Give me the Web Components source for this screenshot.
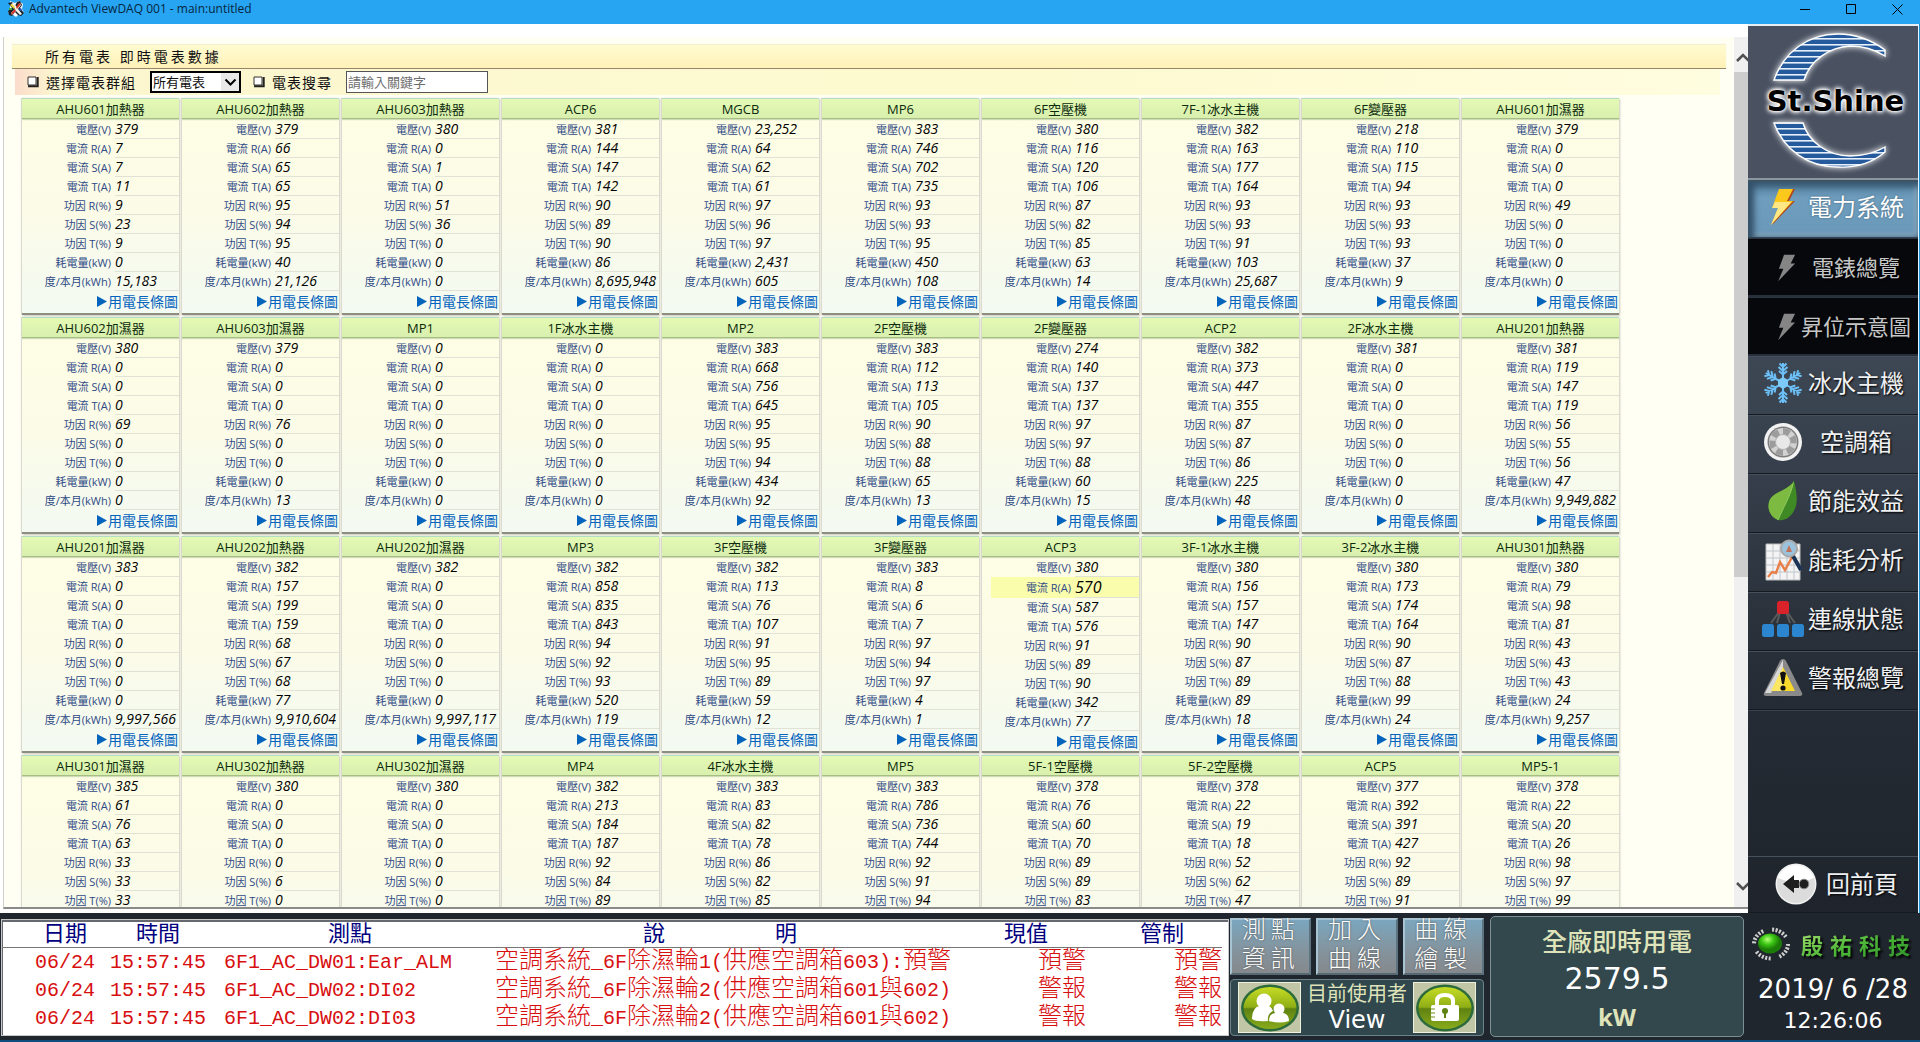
<!DOCTYPE html>
<html lang="zh-Hant">
<head>
<meta charset="utf-8">
<title>Advantech ViewDAQ 001 - main:untitled</title>
<style>
html, body { margin: 0; height: 100%; overflow: hidden; }
body { font-family: "Open Sans", "Noto Sans CJK TC", sans-serif; background: #1f252d; }
</style>
</head>
<body>
<daq-app></daq-app>
<script>
const define = (name, html, setup) => {
  const tpl = document.createElement('template');
  tpl.innerHTML = html;
  customElements.define(name, class extends HTMLElement {
    connectedCallback() {
      if (this.shadowRoot) return;
      this.attachShadow({ mode: 'open' }).appendChild(tpl.content.cloneNode(true));
      if (setup) setup(this, this.shadowRoot);
    }
  });
};

const LABELS = ['電壓(V)', '電流 R(A)', '電流 S(A)', '電流 T(A)', '功因 R(%)', '功因 S(%)', '功因 T(%)', '耗電量(kW)', '度/本月(kWh)'];
const METERS = `AHU601加熱器|379 7 7 11 9 23 9 0 15,183
AHU602加熱器|379 66 65 65 95 94 95 40 21,126
AHU603加熱器|380 0 1 0 51 36 0 0 0
ACP6|381 144 147 142 90 89 90 86 8,695,948
MGCB|23,252 64 62 61 97 96 97 2,431 605
MP6|383 746 702 735 93 93 95 450 108
6F空壓機|380 116 120 106 87 82 85 63 14
7F-1冰水主機|382 163 177 164 93 93 91 103 25,687
6F變壓器|218 110 115 94 93 93 93 37 9
AHU601加濕器|379 0 0 0 49 0 0 0 0
AHU602加濕器|380 0 0 0 69 0 0 0 0
AHU603加濕器|379 0 0 0 76 0 0 0 13
MP1|0 0 0 0 0 0 0 0 0
1F冰水主機|0 0 0 0 0 0 0 0 0
MP2|383 668 756 645 95 95 94 434 92
2F空壓機|383 112 113 105 90 88 88 65 13
2F變壓器|274 140 137 137 97 97 88 60 15
ACP2|382 373 447 355 87 87 86 225 48
2F冰水主機|381 0 0 0 0 0 0 0 0
AHU201加熱器|381 119 147 119 56 55 56 47 9,949,882
AHU201加濕器|383 0 0 0 0 0 0 0 9,997,566
AHU202加熱器|382 157 199 159 68 67 68 77 9,910,604
AHU202加濕器|382 0 0 0 0 0 0 0 9,997,117
MP3|382 858 835 843 94 92 93 520 119
3F空壓機|382 113 76 107 91 95 89 59 12
3F變壓器|383 8 6 7 97 94 97 4 1
ACP3|380 *570 587 576 91 89 90 342 77
3F-1冰水主機|380 156 157 147 90 87 89 89 18
3F-2冰水主機|380 173 174 164 90 87 88 99 24
AHU301加熱器|380 79 98 81 43 43 43 24 9,257
AHU301加濕器|385 61 76 63 33 33 33
AHU302加熱器|380 0 0 0 0 6 0
AHU302加濕器|380 0 0 0 0 0 0
MP4|382 213 184 187 92 84 89
4F冰水主機|383 83 82 78 86 82 85
MP5|383 786 736 744 92 91 94
5F-1空壓機|378 76 60 70 89 89 83
5F-2空壓機|378 22 19 18 52 62 47
ACP5|377 392 391 427 92 89 91
MP5-1|378 22 20 26 98 97 99`.split('\n').map(line => {
  const [name, values] = line.split('|');
  return { name, values: values.split(' ') };
});

/* ---------- window title bar ---------- */
define('daq-titlebar', `
<style>
:host { display: flex; height: 24px; box-sizing: border-box; padding: 0 0 6px 7px; align-items: center; background: #27a4f2; color: #06263d; font-size: 12px; }
h1 { flex: 1; margin: 0 0 0 4px; font-size: 12px; line-height: 18px; font-weight: 400; }
button { width: 46px; height: 18px; padding: 0; border: 0; background: none; display: grid; place-items: center; }
svg { display: block; }
</style>
<svg width="18" height="18" viewBox="0 0 18 18" aria-hidden="true">
  <path d="M3 1l5 2 4-2 4 3-1 5 2 4-5 1-3 3-4-3-4-1 2-4z" fill="#fff"/>
  <path d="M1 3l4-1 3 4 2-4 3-1 2 4-2 3 4 5-3 3-3-1-3-3-3 4-3-1-1-4 4-3z" fill="#17222c"/>
  <path d="M4 4l2-1 4 4 3-4 1 2-3 4 4 5-2 1-4-4-4 4-1-2 4-4z" fill="#f4f4ee"/>
  <path d="M5 4l3 3-1 2-4-4z" fill="#f0d83c"/>
  <path d="M12 3l2 1-4 5-1-2z" fill="#d0382b"/>
  <path d="M4 13l4-4 1 2-4 4z" fill="#d0382b"/>
  <path d="M2 8h3v2H2z" fill="#3fae4a"/><path d="M13 8l2 1-1 2-2-1z" fill="#3059c8"/>
</svg>
<h1>Advantech ViewDAQ 001 - main:untitled</h1>
<button aria-label="Minimize"><svg width="11" height="11"><path d="M0 5.500h10" stroke="#000" fill="none"/></svg></button>
<button aria-label="Maximize"><svg width="11" height="11"><path d="M.5 .5h9v9h-9z" stroke="#000" fill="none"/></svg></button>
<button aria-label="Close"><svg width="11" height="11"><path d="M.5 .5l10 10M10.500 .5l-10 10" stroke="#000" fill="none"/></svg></button>
`);

/* ---------- one power meter ---------- */
define('meter-card', `
<style>
:host { display: flex; flex-direction: column; box-sizing: border-box; min-height: 217px; background: linear-gradient(#fffee4, #fbfbe8 55%, #f3faf2); border-bottom: 2px solid #8d8d82; box-shadow: 1px 1px 2px #c9c9bd, -1px 0 1px #dcdcd2; }
h2 { margin: 0 0 1px; box-sizing: border-box; height: 21px; border-top: 1px solid #b4dcc4; border-bottom: 1px solid #a6bd84; background: linear-gradient(#e4fab4, #d8efae); font-size: 13px; line-height: 20px; font-weight: 400; color: #0c2b0c; text-align: center; box-shadow: 0 1px 1px #cfdcb8; }
table { border-spacing: 0; table-layout: fixed; margin-left: 9px; width: 148px; }
th, td { padding: 0; height: 19px; box-sizing: border-box; white-space: nowrap; }
th { width: 84px; padding-right: 4px; font-size: 11px; line-height: 17px; font-weight: 400; color: #2f4a86; text-align: right; }
td { border-bottom: 1px solid #e0e2d6; font-size: 14px; line-height: 18px; font-style: italic; color: #000; }
tr.hot { background: #fafdac; }
tr.hot td { height: 21px; font-size: 16px; }
a { align-self: flex-end; padding: 1px 1px 0 0; display: flex; align-items: center; gap: 1px; font-size: 14px; line-height: 19px; color: #0463bd; text-decoration: none; }
</style>
<h2></h2><table><tbody></tbody></table>
<a href="#chart"><svg width="10" height="11" viewBox="0 0 10 11" aria-hidden="true"><path d="M0 0l10 5.500-10 5.500z" fill="#0463bd"/></svg><span>用電長條圖</span></a>
`, (el, root) => {
  const { name, values } = el.meter;
  root.querySelector('h2').textContent = name;
  root.querySelector('tbody').innerHTML = values.map((v, i) =>
    `<tr${v[0] === '*' ? ' class="hot"' : ''}><th scope="row">${LABELS[i]}</th><td>${v.replace('*', '')}</td></tr>`).join('');
});

/* ---------- scroll rail ---------- */
define('daq-scrollrail', `
<style>
:host { display: flex; flex-direction: column; width: 14px; background: #f0f0f0; overflow: hidden; }
span { height: 35px; display: flex; align-items: center; padding: 6px 0 0 2px; box-sizing: border-box; }
span.down { margin-top: auto; height: 38px; padding: 0 0 4px 2px; }
i { display: block; height: 58%; background: #cdcdcd; }
svg { flex: none; }
</style>
<span><svg width="14" height="10"><path d="M1 8l6-6 6 6" fill="none" stroke="#505050" stroke-width="2.600"/></svg></span>
<i></i>
<span class="down"><svg width="14" height="10"><path d="M1 2l6 6 6-6" fill="none" stroke="#505050" stroke-width="2.600"/></svg></span>
`);

/* ---------- meter board ---------- */
define('meter-board', `
<style>
:host { display: flex; flex-direction: column; min-width: 0; min-height: 0; box-sizing: border-box; padding: 13px 0 4px 3px; background: #fff; }
.frame { flex: 1; min-height: 0; display: flex; border-left: 1px solid #d0d0cc; border-bottom: 2px solid #8a8a88; overflow: hidden; background: #fffff4; }
.page { flex: 1; min-width: 0; padding: 8px 8px 0; overflow: hidden; }
h2 { margin: 0; padding: 1px 0 0 33px; font-size: 14px; line-height: 22px; font-weight: 400; letter-spacing: 3px; color: #111; background: linear-gradient(#fffbd0, #fff1b8); border-bottom: 1px solid #94876a; box-shadow: 0 -1px 1px #f4efd2; }
form { margin: 0 6px 0 3px; height: 26px; display: flex; align-items: center; background: linear-gradient(90deg, #fbdccb, #fcf6cf 40px, #fdfad0 60%, #fffddf); padding-left: 12px; font-size: 14px; }
label { letter-spacing: 1px; margin: 0 14px 0 7px; color: #111; }
.box { width: 12px; height: 12px; flex: none; }
.pick { display: grid; margin-right: 12px; }
.pick > * { grid-area: 1 / 1; }
.pick svg { justify-self: end; align-self: center; margin-right: 2px; pointer-events: none; }
select { appearance: none; width: 91px; height: 22px; padding: 0 0 0 1px; border: 2px solid #000; border-radius: 0; background: #fff; font: 13px "Open Sans", "Noto Sans CJK TC", sans-serif; color: #111; }
input { width: 142px; height: 22px; box-sizing: border-box; padding: 0 0 0 1px; border: 1px solid #555; font: 13px "Open Sans", "Noto Sans CJK TC", sans-serif; }
input::placeholder { color: #6d6d6d; }
.cards { margin-top: 3px; padding-left: 10px; display: grid; grid-template-columns: repeat(auto-fill, 157px); gap: 2px 3px; }
</style>
<div class="frame">
  <div class="page">
    <h2>所有電表 即時電表數據</h2>
    <form>
      <svg class="box" viewBox="0 0 12 12" aria-hidden="true"><path d="M1 1h8v8h-8z" fill="#fff" stroke="#333"/><path d="M1 10.200h9.700V1" fill="none" stroke="#222" stroke-width="2"/></svg>
      <label for="group">選擇電表群組</label>
      <span class="pick"><select id="group"><option>所有電表</option></select>
        <svg width="18" height="18"><path d="M0 0h18v18H0z" fill="#e9e9e9"/><path d="M4.500 6.500l5 5 5-5" fill="none" stroke="#000" stroke-width="2"/></svg></span>
      <svg class="box" viewBox="0 0 12 12" aria-hidden="true"><path d="M1 1h8v8h-8z" fill="#fff" stroke="#333"/><path d="M1 10.200h9.700V1" fill="none" stroke="#222" stroke-width="2"/></svg>
      <label for="find">電表搜尋</label>
      <input id="find" type="text" placeholder="請輸入關鍵字">
    </form>
    <div class="cards"></div>
  </div>
  <daq-scrollrail></daq-scrollrail>
</div>
`, (el, root) => {
  const box = root.querySelector('.cards');
  METERS.forEach(m => {
    const card = document.createElement('meter-card');
    card.meter = m;
    box.appendChild(card);
  });
});

/* ---------- side navigation ---------- */
const ICONS = {
  bolt: `<svg width="26" height="38" viewBox="0 0 26 38"><path d="M11 1h14l-6 12h6L2 37l7-17H3z" fill="#b0461a"/><path d="M9 1h14l-6 12h6L1 37l7-17H2z" fill="#fcc81c"/><path d="M8 20H2l3-6h16L1 37z" fill="#fff3b0" opacity=".7"/></svg>`,
  dim: `<svg width="20" height="28" viewBox="0 0 26 38"><path d="M9 1h15l-6 12h6L1 37l7-17H2z" fill="#858585"/></svg>`,
  snow: `<svg width="38" height="42" viewBox="-19 -21 38 42"><g stroke="#6cc0f7" stroke-width="2" fill="none">${[0, 60, 120, 180, 240, 300].map(a => `<path transform="rotate(${a})" d="M0 0V-20M-3.500-19.500L0-16l3.500-3.500M-4.500-16L0-12l4.500-4M-4-12L0-8.500l4-3.500"/>`).join('')}</g><path d="M0-6l5 3v6L0 6l-5-3v-6z" fill="#7ccafa"/></svg>`,
  fan: `<svg width="40" height="40" viewBox="-20 -20 40 40"><circle r="19" fill="#f2f2f2"/><circle r="15.500" fill="#7d7d7d"/><circle r="14" fill="#d2d2d2"/>${[0, 60, 120, 180, 240, 300].map(a => `<path transform="rotate(${a})" d="M0-14a14 14 0 0 1 8 3L4-5 0-6z" fill="#9c9c9c"/>`).join('')}<circle r="7.500" fill="#e8e8e8" stroke="#b2b2b2"/></svg>`,
  leaf: `<svg width="32" height="42" viewBox="0 0 32 42"><path d="M27 1c3 12 5 24-2 33-4 5-9 7-14 6C4 37 0 30 2 22 5 11 20 12 27 1z" fill="#3f8a25"/><path d="M27 1C25 14 17 26 11 40 4 37 0 30 2 22 5 11 20 12 27 1z" fill="#7cba42"/><path d="M26 4C23 17 16 28 11 40" stroke="#8fca5c" fill="none"/></svg>`,
  chart: `<svg width="38" height="42" viewBox="0 0 38 42"><path d="M2 5h34v36H2z" fill="#f4f4f4" stroke="#bbb"/><path d="M9 5v36M16 5v36M23 5v36M30 5v36M2 12h34M2 19h34M2 26h34M2 33h34" stroke="#bfc6cc" fill="none"/><path d="M4 38l4-5 4 1 4-11 5 8 6-11 3-8 4-2" fill="none" stroke="#e8804a" stroke-width="2.400"/><path d="M29 17l8 14" stroke="#1c3556" stroke-width="4"/><circle cx="25" cy="9.500" r="8" fill="#9cc3dd" stroke="#a9a9a9" stroke-width="2"/><path d="M22 13l3-7 3 7z" fill="#c0735a"/></svg>`,
  net: `<svg width="42" height="38" viewBox="0 0 42 38"><path d="M17 12l-8 11M25 12l8 11M18 12l-3 11M24 12l4 11" stroke="#5b5b5b" stroke-width="2"/><rect x="15" y="1" width="12" height="13" rx="2.500" fill="#d9222a"/><g fill="#2b86cf"><rect x="0" y="24" width="12" height="13" rx="2.500"/><rect x="15" y="24" width="12" height="13" rx="2.500"/><rect x="30" y="24" width="12" height="13" rx="2.500"/></g></svg>`,
  warn: `<svg width="42" height="40" viewBox="0 0 42 40"><path d="M21 1q2 0 3 2l16 32q1 3-2 3H4q-3 0-2-3L18 3q1-2 3-2z" fill="#8a8a8a"/><path d="M21 2L3 35h6L21 10z" fill="#d8d8d8"/><path d="M21 9l12 24H9z" fill="#f8d92c"/><path d="M21 9v24H9z" fill="#fdf08a" opacity=".6"/><path d="M18 15q3-3 6 0l-2 11h-2z" fill="#111"/><circle cx="21" cy="30" r="2.600" fill="#111"/></svg>`,
  back: `<svg width="42" height="42" viewBox="-21 -21 42 42"><circle r="20.500" fill="#f1f1f1"/><circle r="19" fill="#dcdcdc"/><path d="M-18-6a19 19 0 0 1 36 0q-18 8-36 0z" fill="#fff"/><path d="M-13 0L-2-9v5h5v8h-5v5z" fill="#1e1e1e"/><circle cx="8" cy="0" r="4.800" fill="#1e1e1e" stroke="#888"/></svg>`
};
define('nav-item', `
<style>
:host { display: block; box-sizing: border-box; height: 59px; border-top: 1px solid #46505c; border-bottom: 1px solid #151a21; }
a { height: 100%; box-sizing: border-box; display: grid; grid-template-columns: 42px 100px; gap: 2px; padding: 0 0 6px 14px; align-items: center; color: #eef0f2; text-decoration: none; font-size: 24px; line-height: 30px; font-weight: 400; text-shadow: 1px 1px 2px #000; }
.ico { display: grid; place-items: center; }
svg { display: block; }
.txt { justify-self: center; white-space: nowrap; }
:host([kind=active]) { background: linear-gradient(#5480a0, #6f9dbd 30%, #6a98b8); height: 58px; border-top: 2px solid #3c5366; border-bottom-color: #2e4356; box-shadow: inset 6px 0 6px #34516a, inset 0 5px 6px #3d5e77, inset -3px -3px 4px #9fc0d5; }
:host([kind=active]) a { color: #fff; text-shadow: 0 0 2px #3d5e77; }
:host([kind=sub]) { background: #06080c; border-top-color: #2c3440; border-bottom: 2px solid #262f3b; }
:host([kind=sub]) a { font-size: 22px; color: #c6c6c6; padding-bottom: 0; }
:host([kind=sub]) .ico { padding: 2px 0 0 8px; }
:host([kind=back]) { height: 57px; }
:host([kind=back]) a { grid-template-columns: 42px 74px; padding: 0 0 2px 27px; gap: 8px; }
</style>
<a href="#page"><span class="ico" aria-hidden="true"></span><span class="txt"><slot></slot></span></a>
`, (el, root) => { root.querySelector('.ico').innerHTML = ICONS[el.getAttribute('icon')]; });

define('shine-logo', `
<style>
:host { display: grid; height: 152px; box-sizing: content-box; border-top: 2px solid #e9eef2; border-bottom: 2px solid #8d959f; background: #4a5262; }
:host > * { grid-area: 1 / 1; }
svg { display: block; filter: drop-shadow(0 0 3px #fff); }
b { align-self: center; justify-self: center; font: 700 29px/32px "DejaVu Sans", sans-serif; color: #000; text-shadow: 0 0 2px #fff, 0 0 4px #fff, 0 0 5px #fff, 0 0 6px #fff; padding: 0 0 3px 5px; }
</style>
<svg width="170" height="152" viewBox="0 0 170 152" aria-hidden="true">
  <defs><pattern id="s" width="10" height="6" patternUnits="userSpaceOnUse"><path d="M0 0h10v6H0z" fill="#255a9c"/><path d="M0 0h10v1.600H0z" fill="#e6f0fa"/></pattern></defs>
  <g fill="url(#s)" stroke="#fff" stroke-width="1.400">
  <path d="M26 54C36 26 60 8 90 8c20 0 36 8 47 16v6C126 23 116 20 102 20 82 21 62 34 56 54z"/>
  <path d="M26 97h29c5 18 24 33 47 33 14 0 25-3 35-9v5c-12 10-28 16-47 15C60 141 36 124 26 97z"/>
  </g>
</svg>
<b>St.Shine</b>
`);

define('side-nav', `
<style>
:host { display: flex; flex-direction: column; background: linear-gradient(#4a5262, #3c4653 40%, #252c35 75%, #1f242c); }
.space { flex: 1; border-top: 1px solid #39424d; }
</style>
<shine-logo></shine-logo>
<nav-item kind="active" icon="bolt">電力系統</nav-item>
<nav-item kind="sub" icon="dim">電錶總覽</nav-item>
<nav-item kind="sub" icon="dim">昇位示意圖</nav-item>
<nav-item icon="snow">冰水主機</nav-item>
<nav-item icon="fan">空調箱</nav-item>
<nav-item icon="leaf">節能效益</nav-item>
<nav-item icon="chart">能耗分析</nav-item>
<nav-item icon="net">連線狀態</nav-item>
<nav-item icon="warn">警報總覽</nav-item>
<div class="space"></div>
<nav-item kind="back" icon="back">回前頁</nav-item>
`);

/* ---------- alarm list ---------- */
define('alarm-list', `
<style>
:host { display: block; box-sizing: border-box; min-width: 0; background: #fff; border: 1px solid #c9c9c9; padding-right: 6px; box-shadow: inset 1px 2px 0 #666a70; }
table { width: 100%; table-layout: fixed; border-spacing: 0; font-family: "Liberation Mono", "Noto Sans CJK TC", monospace; white-space: nowrap; }
th { height: 28px; padding: 4px 0 0; box-sizing: border-box; border-bottom: 1px solid #777; font-size: 22px; line-height: 23px; font-weight: 400; color: #000080; }
td { height: 28px; padding: 0; font-size: 24px; line-height: 28px; font-weight: 300; color: #d80f0f; }
span { font-size: 20px; line-height: 20px; font-weight: 400; }
.date { width: 100px; padding-left: 26px; box-sizing: border-box; }
.time { width: 112px; }
.date, .time { text-align: center; }
.point { width: 262px; padding-left: 10px; box-sizing: border-box; }
.desc { padding-left: 19px; }
.val { width: 152px; } .ctl { width: 120px; }
td.val { text-align: right; padding-right: 16px; box-sizing: border-box; }
td.ctl { text-align: right; }
.split { display: flex; justify-content: center; gap: 110px; padding-right: 5px; }
</style>
<table><thead><tr>
<th class="date">日期</th><th class="time">時間</th><th class="point">測點</th>
<th class="desc"><div class="split"><div>說</div><div>明</div></div></th><th class="val">現值</th><th class="ctl">管制</th>
</tr></thead><tbody></tbody></table>
`, (el, root) => {
  const rows = [
    ['06/24', '15:57:45', '6F1_AC_DW01:Ear_ALM', '空調系統_6F除濕輪1(供應空調箱603):預警', '預警', '預警'],
    ['06/24', '15:57:45', '6F1_AC_DW02:DI02', '空調系統_6F除濕輪2(供應空調箱601與602)', '警報', '警報'],
    ['06/24', '15:57:45', '6F1_AC_DW02:DI03', '空調系統_6F除濕輪2(供應空調箱601與602)', '警報', '警報']
  ];
  const cls = ['date', 'time', 'point', 'desc', 'val', 'ctl'];
  /* Latin runs are half as wide as the CJK characters beside them. */
  root.querySelector('tbody').innerHTML = rows.map(r => '<tr>' + r.map((t, i) =>
    `<td class="${cls[i]}">${t.replace(/[\x21-\x7e]+/g, m => `<span>${m}</span>`)}</td>`).join('') + '</tr>').join('');
});

/* ---------- tool buttons and current user ---------- */
define('tool-button', `
<style>
:host { display: block; }
button { width: 100%; height: 100%; box-sizing: border-box; padding: 0 0 6px; border: 2px solid; border-color: #a8c3d2 #5d7480 #566973 #a8c3d2; background: linear-gradient(#7ba6be, #84939c 60%, #85898d); font-family: "Liberation Sans", "Noto Sans CJK TC", sans-serif; font-size: 24px; line-height: 29px; font-weight: 300; letter-spacing: 5px; color: #fff; text-shadow: 0 0 2px #444; display: flex; align-items: center; justify-content: center; }
</style>
<button><span><slot></slot></span></button>
`);
define('user-box', `
<style>
:host { display: grid; grid-template-columns: 63px 1fr 63px; align-items: center; box-sizing: border-box; padding: 0 7px; border: 1px solid #6d8288; border-radius: 4px; background: #30474e; }
button { width: 63px; height: 51px; padding: 0; display: grid; place-items: center; border: 1px solid #eef0dc; background: #c0c6a6; }
svg { display: block; }
div { text-align: center; }
p { margin: 0; font-size: 20px; line-height: 24px; color: #dfe3b9; white-space: nowrap; }
p.name { font: 24px/28px "DejaVu Sans", sans-serif; color: #fff; }
</style>
<button aria-label="使用者"><svg width="60" height="48" viewBox="0 0 60 48"><defs><linearGradient id="g" x2="0" y2="1"><stop stop-color="#c6dc24"/><stop offset=".48" stop-color="#8fae16"/><stop offset=".52" stop-color="#5f8212"/><stop offset="1" stop-color="#88ab1c"/></linearGradient></defs><ellipse cx="30" cy="24" rx="29" ry="23.500" fill="#2d6b3b"/><ellipse cx="30" cy="24" rx="26.500" ry="21" fill="url(#g)"/><g fill="#fff"><circle cx="24" cy="17" r="7.500"/><path d="M12 35q0-12 8-13h8q4 1 5 5-6 3-5 10-12 1-16-2z"/><circle cx="39" cy="25" r="5.500"/><path d="M29 37q0-7 6-8h8q6 1 6 8-9 3-20 0z"/></g></svg></button>
<div><p>目前使用者</p><p class="name">View</p></div>
<button aria-label="鎖定"><svg width="60" height="48" viewBox="0 0 60 48"><defs><linearGradient id="g" x2="0" y2="1"><stop stop-color="#c6dc24"/><stop offset=".48" stop-color="#8fae16"/><stop offset=".52" stop-color="#5f8212"/><stop offset="1" stop-color="#88ab1c"/></linearGradient></defs><ellipse cx="30" cy="24" rx="29" ry="23.500" fill="#2d6b3b"/><ellipse cx="30" cy="24" rx="26.500" ry="21" fill="url(#g)"/><path d="M22 22v-5q0-6 8-6t8 6v5" fill="none" stroke="#fff" stroke-width="4"/><rect x="16" y="21" width="28" height="16" rx="2" fill="#fff"/><path d="M16 25h4M16 29h4M16 33h4" stroke="#6f9010"/><circle cx="30" cy="27" r="3" fill="#5f8212"/><path d="M29 28h2v6h-2z" fill="#5f8212"/></svg></button>
`);

/* ---------- plant power and clock ---------- */
define('power-box', `
<style>
:host { display: flex; flex-direction: column; align-items: center; box-sizing: border-box; padding-top: 5px; border: 1px solid #7c8f93; border-radius: 5px; background: #32484c; color: #dfe3b9; font-weight: 500; font-size: 25px; line-height: 38px; }
.num { font: 30px/38px "DejaVu Sans", sans-serif; color: #fff; }
.unit { font-weight: 700; font-size: 24px; }
</style>
<div>全廠即時用電</div><div class="num">2579.5</div><div class="unit">kW</div>
`);
define('brand-clock', `
<style>
:host { display: flex; flex-direction: column; align-items: center; box-sizing: border-box; padding: 3px 0 0 4px; color: #fff; font-family: "DejaVu Sans", sans-serif; }
.brand { align-self: stretch; display: flex; align-items: center; gap: 10px; padding: 0 0 6px 3px; box-sizing: border-box; height: 55px; white-space: nowrap; }
.brand b { font: 700 22px/30px "Noto Sans CJK TC", sans-serif; letter-spacing: 7px; background: linear-gradient(160deg, #a8e070, #4db838 50%, #2f8f2a); -webkit-background-clip: text; background-clip: text; color: transparent; filter: drop-shadow(2px 2px 1px #000); }
time { font-size: 26px; line-height: 31px; white-space: pre; }
time + time { font-size: 22px; }
</style>
<div class="brand"><svg width="40" height="36" viewBox="-20 -18 40 36" aria-hidden="true"><defs><radialGradient id="b" cx=".4" cy=".3"><stop stop-color="#b6ff7a"/><stop offset=".5" stop-color="#3cc814"/><stop offset="1" stop-color="#1c7c08"/></radialGradient></defs><ellipse rx="17" ry="14.500" fill="none" stroke="#cfcfcf" stroke-width="4" stroke-dasharray="2 1.500 2 1.500 2 1.500 2 1.500 2 9"/><ellipse cx="-1" cy="-.5" rx="12" ry="10" fill="url(#b)"/></svg><b>殷祐科技</b></div>
<time>2019/ 6 /28</time><time>12:26:06</time>
`);

define('daq-footer', `
<style>
:host { display: flex; box-sizing: border-box; height: 129px; padding: 3px 2px 3px 1px; background: #20262e; border-bottom: 2px solid #0d4c7c; }
alarm-list { flex: 1; margin: 3px 0 1px; }
.tools { width: 254px; margin: 2px 6px 0 1px; display: grid; grid-template-columns: repeat(3, 1fr); grid-template-rows: 57px 57px; gap: 4px 5px; }
user-box { grid-column: 1 / -1; }
power-box { width: 254px; }
brand-clock { width: 174px; }
</style>
<alarm-list></alarm-list>
<div class="tools">
  <tool-button>測點<br>資訊</tool-button><tool-button>加入<br>曲線</tool-button><tool-button>曲線<br>繪製</tool-button>
  <user-box></user-box>
</div>
<power-box></power-box>
<brand-clock></brand-clock>
`);

define('daq-app', `
<style>
:host { display: flex; flex-direction: column; height: 100vh; }
.main { flex: 1; min-height: 0; display: flex; border-right: 1px solid #1d8fd2; }
meter-board { flex: 1; }
side-nav { width: 170px; border-right: 1px solid #e6f8ff; }
</style>
<daq-titlebar></daq-titlebar>
<div class="main"><meter-board></meter-board><side-nav></side-nav></div>
<daq-footer></daq-footer>
`);
</script>
</body>
</html>
